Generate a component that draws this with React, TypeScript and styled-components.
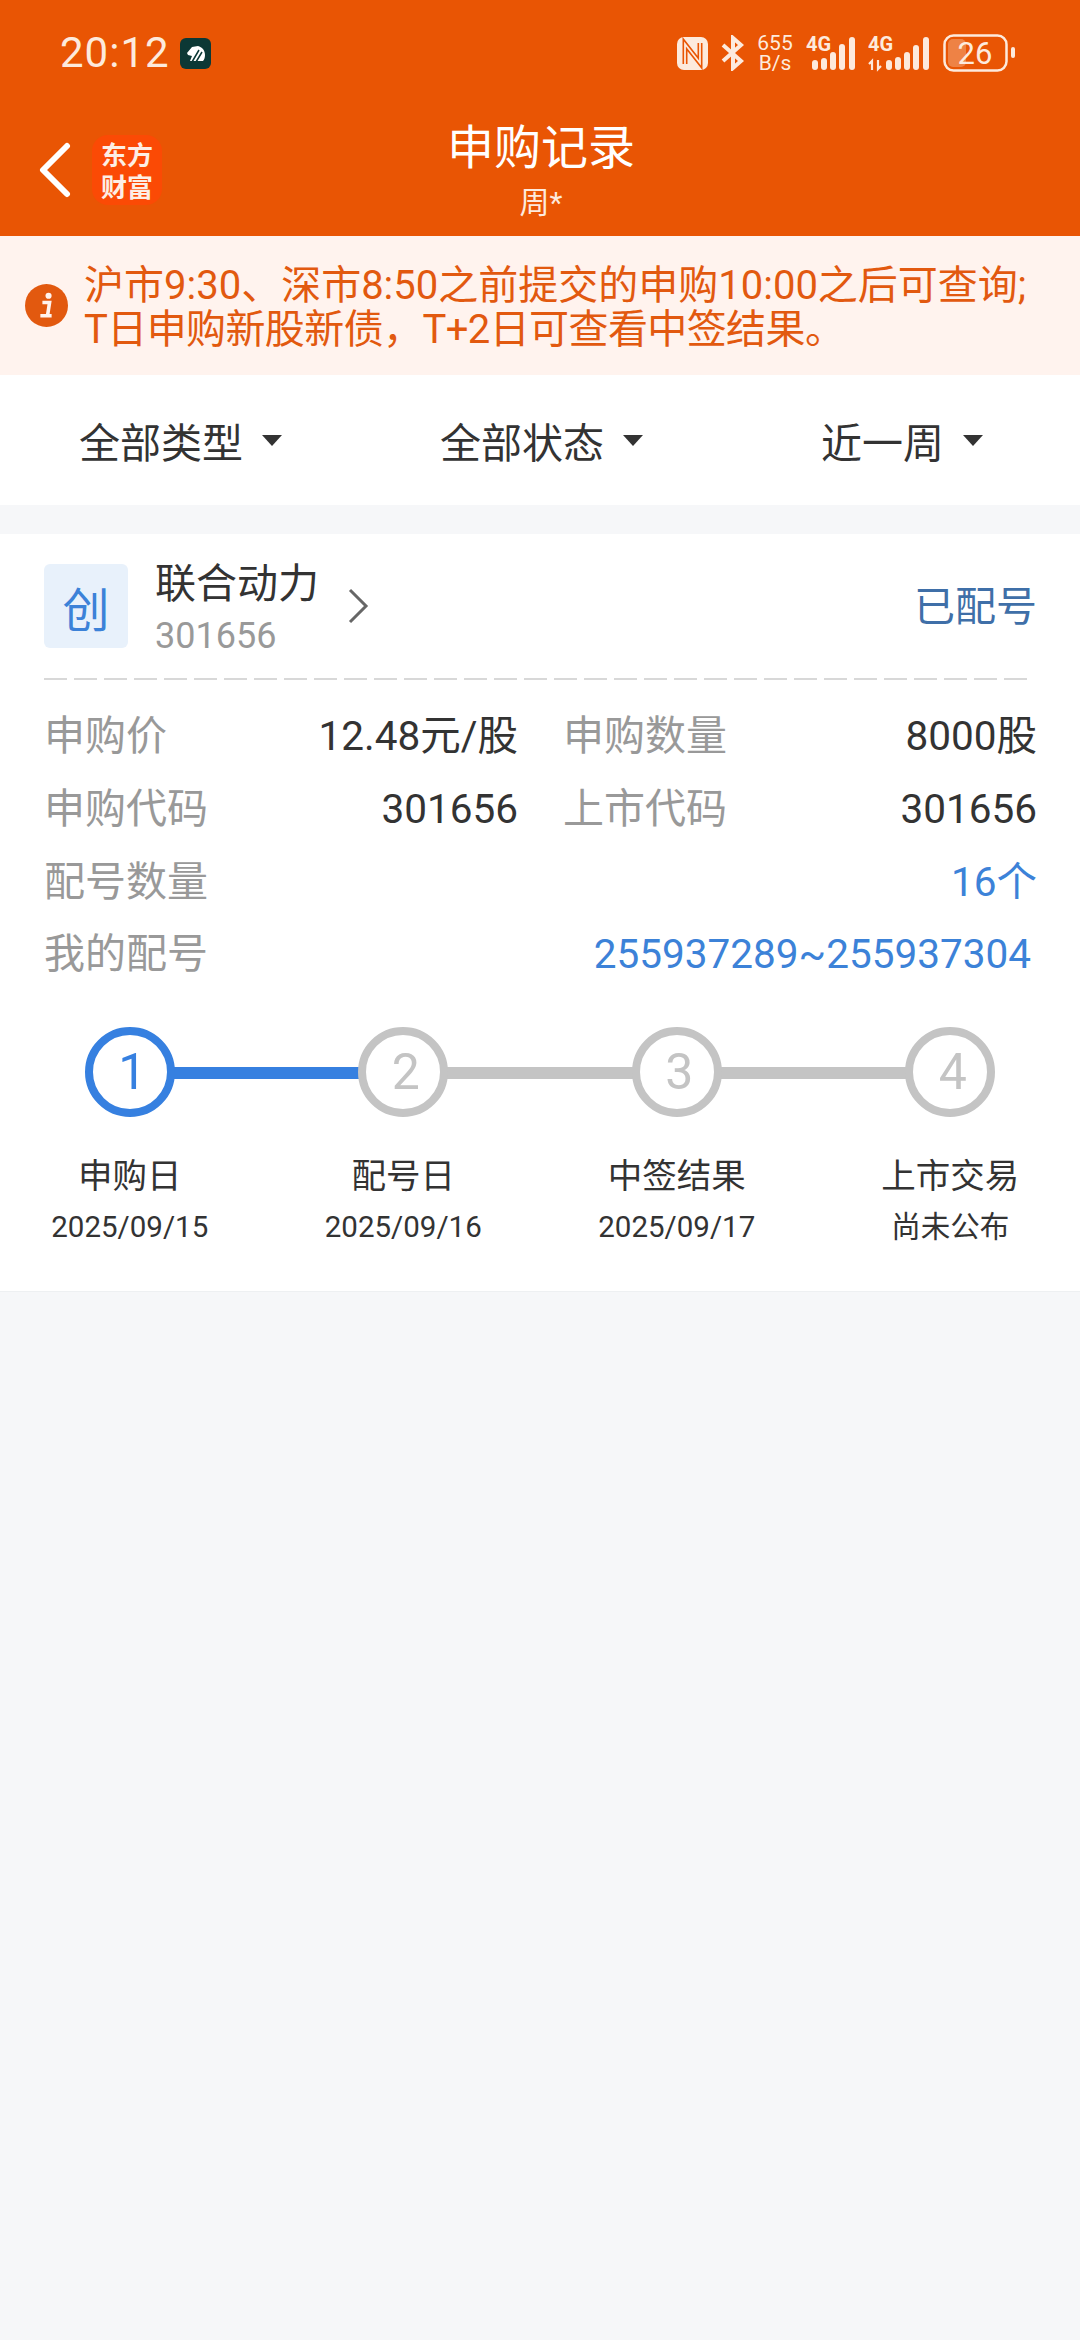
import styled, { createGlobalStyle } from "styled-components";

const GlobalStyle = createGlobalStyle`
  html, body {
    margin: 0;
    padding: 0;
    background: #f6f7f9;
  }
  * {
    box-sizing: border-box;
  }
`;

const FONT = `Roboto, "Noto Sans CJK SC", "Noto Sans", sans-serif`;

const Page = styled.div`
  width: 1080px;
  height: 2340px;
  background: #f6f7f9;
  font-family: ${FONT};
  overflow: hidden;
`;

const Header = styled.div`
  height: 236px;
  background: #e95504;
  display: flex;
  flex-direction: column;
`;

const StatusBar = styled.div`
  height: 106px;
  padding: 0 65px 0 60px;
  display: flex;
  align-items: center;
  justify-content: space-between;
  color: #fdeadd;
`;

const StatusLeft = styled.div`
  display: flex;
  align-items: center;
  gap: 10px;
`;

const Clock = styled.span`
  font-size: 42px;
  line-height: 1;
  letter-spacing: 1px;
`;

const StatusRight = styled.div`
  display: flex;
  align-items: center;
  gap: 13px;
`;

const Speed = styled.div`
  font-size: 21px;
  line-height: 20px;
  text-align: center;
  width: 36px;
`;

const Nav = styled.div`
  position: relative;
  flex: 1;
  display: flex;
  align-items: center;
  padding: 0 0 2px 38px;
`;

const Logo = styled.div`
  width: 70px;
  height: 70px;
  margin-left: 20px;
  border-radius: 16px;
  background: #fb4a05;
  color: #fdeee4;
  font-family: "Noto Sans CJK SC", serif;
  font-weight: 700;
  font-size: 26px;
  line-height: 32px;
  text-align: center;
  display: flex;
  align-items: center;
  justify-content: center;
`;

const NavTitle = styled.div`
  position: absolute;
  left: 301px;
  right: 299px;
  top: 14px;
  text-align: center;
  color: #fff;
`;

const TitleMain = styled.div`
  font-size: 47px;
  line-height: 56px;
`;

const TitleSub = styled.div`
  margin-top: 10px;
  font-size: 30px;
  line-height: 34px;
  color: #fdeadd;
`;

const Notice = styled.div`
  height: 139px;
  background: #fff3ee;
  display: flex;
  align-items: center;
  padding-left: 25px;
  gap: 16px;
  color: #e2590f;
`;

const NoticeText = styled.div`
  padding-top: 4px;
  font-size: 40px;
  line-height: 44px;
  white-space: nowrap;
`;

const NoticeLine = styled.div<{ $tight?: boolean }>`
  letter-spacing: ${(p) => (p.$tight ? "-0.6px" : "0")};
`;

const Filters = styled.div`
  height: 130px;
  background: #fff;
  display: flex;
  align-items: center;
`;

const Filter = styled.div<{ $width: number; $pad: number }>`
  width: ${(p) => p.$width}px;
  padding-left: ${(p) => p.$pad}px;
  display: flex;
  align-items: center;
  gap: 19px;
  font-size: 41px;
  color: #333;
`;

const Caret = styled.span`
  width: 0;
  height: 0;
  border-left: 10px solid transparent;
  border-right: 10px solid transparent;
  border-top: 11px solid #333;
`;

const Card = styled.div`
  margin-top: 29px;
  height: 758px;
  background: #fff;
  padding: 30px 43px 0 44px;
  border-bottom: 1px solid #eef0f2;
`;

const CardHead = styled.div`
  display: flex;
  align-items: center;
  height: 84px;
`;

const Badge = styled.div`
  width: 84px;
  height: 84px;
  border-radius: 6px;
  background: #e8f1fb;
  color: #3c82d8;
  font-size: 47px;
  display: flex;
  align-items: center;
  justify-content: center;
`;

const StockInfo = styled.div`
  margin: 8px 0 0 27px;
  display: flex;
  flex-direction: column;
`;

const StockName = styled.div`
  font-size: 41px;
  line-height: 52px;
  color: #333;
`;

const StockCode = styled.div`
  font-size: 36px;
  line-height: 52px;
  color: #999;
`;

const Chevron = styled.svg`
  margin-left: 28px;
`;

const StateText = styled.div`
  margin: 0 0 6px auto;
  font-size: 41px;
  color: #3f6fa8;
`;

const Dashed = styled.div`
  height: 2px;
  margin: 30px 6px 0 0;
  background: repeating-linear-gradient(
    to right,
    #d8d8d8 0 23px,
    transparent 23px 30px
  );
`;

const Details = styled.div`
  margin-top: 16px;
`;

const DetailRow = styled.div`
  height: 72.7px;
  display: flex;
  align-items: center;
`;

const Pair = styled.div<{ $wide?: boolean }>`
  width: ${(p) => (p.$wide ? "100%" : "474px")};
  display: flex;
  justify-content: space-between;
  align-items: baseline;
  & + & {
    margin-left: 45px;
    width: 474px;
  }
`;

const Label = styled.span`
  font-size: 41px;
  color: #999;
`;

const Value = styled.span<{ $blue?: boolean; $inset?: boolean }>`
  font-size: 40.5px;
  margin-right: ${(p) => (p.$inset ? "6px" : "0")};
  color: ${(p) => (p.$blue ? "#3c82d8" : "#333")};
`;

const Steps = styled.div`
  display: grid;
  grid-template-columns: repeat(4, 273.5px);
  margin: 40px 0 0 -51px;
`;

const Step = styled.div`
  position: relative;
  display: flex;
  flex-direction: column;
  align-items: center;
`;

const Circle = styled.div<{ $on?: boolean }>`
  position: relative;
  z-index: 1;
  width: 90px;
  height: 90px;
  padding-left: 5px;
  border-radius: 50%;
  background: #fff;
  border: 8px solid ${(p) => (p.$on ? "#3680e0" : "#c4c4c4")};
  color: ${(p) => (p.$on ? "#3680e0" : "#c4c4c4")};
  font-size: 50px;
  display: flex;
  align-items: center;
  justify-content: center;
`;

const Line = styled.div<{ $on?: boolean }>`
  position: absolute;
  left: 50%;
  width: 100%;
  top: 40px;
  height: 12px;
  background: ${(p) => (p.$on ? "#3680e0" : "#c4c4c4")};
`;

const StepName = styled.div`
  margin-top: 36px;
  font-size: 34.5px;
  line-height: 46px;
  color: #333;
`;

const StepDate = styled.div`
  margin-top: 8px;
  font-size: 29.5px;
  line-height: 40px;
  color: #333;
`;

const steps = [
  { name: "申购日", date: "2025/09/15" },
  { name: "配号日", date: "2025/09/16" },
  { name: "中签结果", date: "2025/09/17" },
  { name: "上市交易", date: "尚未公布" },
];

// x position + height of each signal bar, measured from the reference
const signalA = [
  [9, 10],
  [18, 12],
  [27, 18],
  [36, 26],
  [46, 33],
];
const signalB = [
  [21, 10],
  [30, 13],
  [39, 18],
  [48, 25],
  [58, 33],
];

function Signal({ width, bars, arrows }: { width: number; bars: number[][]; arrows?: boolean }) {
  return (
    <svg width={width} height="48" viewBox={`0 -6 ${width} 48`}>
      <text x="0" y="16" fontSize="20" fontWeight="700" fill="#fdeadd" fontFamily="Roboto">
        4G
      </text>
      {arrows && <path d="M4 35v-9l-3 3M10 25v9l3-3" stroke="#fdeadd" strokeWidth="2.2" fill="none" />}
      {bars.map(([x, h]) => (
        <rect key={x} x={x - 3} y={35 - h} width="6" height={h} rx="3" fill="#fdeadd" />
      ))}
    </svg>
  );
}

export default function App() {
  return (
    <Page>
      <GlobalStyle />
      <Header>
        <StatusBar>
          <StatusLeft>
            <Clock>20:12</Clock>
            <svg width="31" height="31" viewBox="0 0 31 31">
              <rect width="31" height="31" rx="6" fill="#0c3835" />
              <path d="M7 15l5-6 6-1c4 1 7 4 7 9 0 3-1 5-2 6H10l2-5-4-1z" fill="#fff" />
              <path d="M12 24l7-12M16 24l6-10" stroke="#0c3835" strokeWidth="1.5" />
            </svg>
          </StatusLeft>
          <StatusRight>
            <svg width="31" height="33" viewBox="0 0 31 33">
              <rect width="31" height="33" rx="7" fill="#fdeadd" />
              <path d="M8 27V7l15 19V6" stroke="#e95504" strokeWidth="5" fill="none" />
              <path d="M8 27V7l15 19V6" stroke="#fdeadd" strokeWidth="1.8" fill="none" />
            </svg>
            <svg width="23" height="36" viewBox="0 0 23 36">
              <path d="M2 10l18 16-8 7V3l8 7L2 26" stroke="#fdeadd" strokeWidth="4" fill="none" />
            </svg>
            <Speed>
              655
              <br />
              B/s
            </Speed>
            <Signal width={49} bars={signalA} />
            <Signal width={62} bars={signalB} arrows />
            <svg width="72" height="38" viewBox="0 0 72 38">
              <rect x="1.5" y="1.5" width="62" height="35" rx="9" fill="none" stroke="#fdeadd" strokeWidth="2.5" />
              <rect x="5" y="5" width="18" height="28" rx="5" fill="#fdeadd" fillOpacity=".3" />
              <rect x="68" y="13" width="4" height="11" rx="2" fill="#fdeadd" />
              <text x="32" y="30" textAnchor="middle" fontSize="31" fill="#fdeadd" fontFamily="Roboto">
                26
              </text>
            </svg>
          </StatusRight>
        </StatusBar>
        <Nav>
          <svg width="34" height="56" viewBox="0 0 34 56">
            <path d="M29 4L5 28l24 24" stroke="#fff" strokeWidth="6" fill="none" strokeLinecap="round" strokeLinejoin="round" />
          </svg>
          <Logo>
            东方
            <br />
            财富
          </Logo>
          <NavTitle>
            <TitleMain>申购记录</TitleMain>
            <TitleSub>周*</TitleSub>
          </NavTitle>
        </Nav>
      </Header>
      <Notice>
        <svg width="43" height="43" viewBox="0 0 42 42">
          <circle cx="21" cy="21" r="21" fill="#e2590f" />
          <circle cx="23" cy="11.5" r="3" fill="#fff3ee" />
          <path d="M17 18h7l-2 13h3M15 31h11" stroke="#fff3ee" strokeWidth="3.5" fill="none" />
        </svg>
        <NoticeText>
          <NoticeLine>沪市9:30、深市8:50之前提交的申购10:00之后可查询;</NoticeLine>
          <NoticeLine $tight>T日申购新股新债，T+2日可查看中签结果。</NoticeLine>
        </NoticeText>
      </Notice>
      <Filters>
        <Filter $width={360} $pad={79}>
          全部类型 <Caret />
        </Filter>
        <Filter $width={360} $pad={80}>
          全部状态 <Caret />
        </Filter>
        <Filter $width={360} $pad={101}>
          近一周 <Caret />
        </Filter>
      </Filters>
      <Card>
        <CardHead>
          <Badge>创</Badge>
          <StockInfo>
            <StockName>联合动力</StockName>
            <StockCode>301656</StockCode>
          </StockInfo>
          <Chevron width="22" height="36" viewBox="0 0 22 36">
            <path d="M3 2l16 16L3 34" stroke="#666" strokeWidth="3" fill="none" />
          </Chevron>
          <StateText>已配号</StateText>
        </CardHead>
        <Dashed />
        <Details>
          <DetailRow>
            <Pair>
              <Label>申购价</Label>
              <Value>12.48元/股</Value>
            </Pair>
            <Pair>
              <Label>申购数量</Label>
              <Value>8000股</Value>
            </Pair>
          </DetailRow>
          <DetailRow>
            <Pair>
              <Label>申购代码</Label>
              <Value>301656</Value>
            </Pair>
            <Pair>
              <Label>上市代码</Label>
              <Value>301656</Value>
            </Pair>
          </DetailRow>
          <DetailRow>
            <Pair $wide>
              <Label>配号数量</Label>
              <Value $blue>16个</Value>
            </Pair>
          </DetailRow>
          <DetailRow>
            <Pair $wide>
              <Label>我的配号</Label>
              <Value $blue $inset>
                255937289~255937304
              </Value>
            </Pair>
          </DetailRow>
        </Details>
        <Steps>
          {steps.map((s, i) => (
            <Step key={s.name}>
              {i < 3 && <Line $on={i === 0} />}
              <Circle $on={i === 0}>{i + 1}</Circle>
              <StepName>{s.name}</StepName>
              <StepDate>{s.date}</StepDate>
            </Step>
          ))}
        </Steps>
      </Card>
    </Page>
  );
}
